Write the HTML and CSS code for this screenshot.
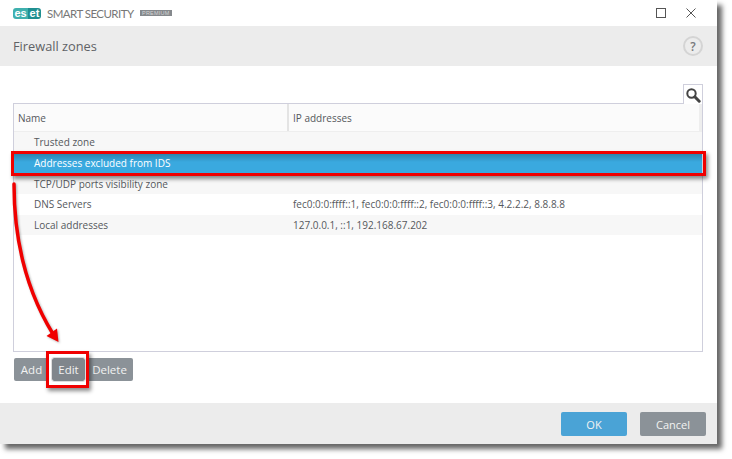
FILE: index.html
```html
<!DOCTYPE html>
<html lang="en">
<head>
<meta charset="utf-8">
<title>Firewall zones</title>
<link rel="stylesheet" href="styles.css">
</head>
<body>
<div class="window">
  <div class="titlebar">
    <div class="brand">
      <span class="logo"><span class="logo-es">es</span><span class="logo-et">et</span></span>
      <span class="product">SMART SECURITY</span>
      <span class="tier">PREMIUM</span>
    </div>
    <div class="controls">
      <svg width="14" height="14" viewBox="0 0 14 14"><rect x="2.5" y="2.5" width="9" height="9" fill="none" stroke="#555" stroke-width="1"/></svg>
      <svg width="14" height="14" viewBox="0 0 14 14"><path d="M2.5 2.5 L11.5 11.5 M11.5 2.5 L2.5 11.5" fill="none" stroke="#555" stroke-width="1"/></svg>
    </div>
  </div>
  <div class="header">
    <h1 class="heading">Firewall zones</h1>
    <span class="help">?</span>
  </div>
  <div class="content">
    <div class="search-row">
      <span class="search">
        <svg width="16" height="16" viewBox="0 0 16 16"><circle cx="6.5" cy="6.5" r="4.2" fill="none" stroke="#444" stroke-width="2"/><path d="M9.8 9.8 L14.2 14.2" stroke="#444" stroke-width="3" stroke-linecap="round"/></svg>
      </span>
    </div>
    <div class="table">
      <div class="thead">
        <div class="cell-name">Name</div>
        <div class="th-ip">IP addresses</div>
      </div>
      <div class="row"><div class="cell-name indent">Trusted zone</div><div class="cell-ip"></div></div>
      <div class="row selected"><div class="cell-name indent">Addresses excluded from IDS</div><div class="cell-ip"></div></div>
      <div class="row"><div class="cell-name indent">TCP/UDP ports visibility zone</div><div class="cell-ip"></div></div>
      <div class="row plain"><div class="cell-name indent">DNS Servers</div><div class="cell-ip">fec0:0:0:ffff::1, fec0:0:0:ffff::2, fec0:0:0:ffff::3, 4.2.2.2, 8.8.8.8</div></div>
      <div class="row"><div class="cell-name indent">Local addresses</div><div class="cell-ip">127.0.0.1, ::1, 192.168.67.202</div></div>
    </div>
    <div class="actions">
      <button class="btn btn-add">Add</button>
      <button class="btn btn-edit">Edit</button>
      <button class="btn btn-delete">Delete</button>
    </div>
  </div>
  <div class="footer">
    <button class="btn-main btn-ok">OK</button>
    <button class="btn-main btn-cancel">Cancel</button>
  </div>
</div>
<div class="mark mark-row"></div>
<div class="mark mark-edit"></div>
<svg class="arrow" width="732" height="459" viewBox="0 0 732 459">
  <path class="arrow-line" d="M14 184 C14 240 26 290 53 334"/>
  <path class="arrow-head" d="M58.5 342 L46.5 336 L57 328.5 Z"/>
</svg>
</body>
</html>
```
FILE: styles.css
```css
* { box-sizing: border-box; }
html, body { margin: 0; padding: 0; }
body { width: 732px; height: 459px; background: #fff; font-family: "Open Sans", "Noto Sans", sans-serif; font-size: 10px; color: #55585c; overflow: hidden; position: relative; }
.window { width: 717px; height: 444px; background: #fff; display: flex; flex-direction: column; box-shadow: 5px 5px 5px #666; }
.titlebar { height: 26px; display: flex; justify-content: space-between; align-items: center; padding: 0 19px 0 13px; flex: none; }
.brand { display: flex; align-items: center; gap: 6px; }
.logo { display: inline-flex; height: 11px; width: 28px; color: #fff; font-family: "Liberation Sans", sans-serif; font-weight: 700; font-size: 11px; line-height: 10px; }
.logo-es { width: 15px; height: 11px; text-align: center; background: #3fb0ae; border-radius: 3px 0 0 3px; }
.logo-et { width: 13px; height: 11px; text-align: center; background: #1f8f90; border-radius: 0 3px 3px 0; }
.product { font-family: "Lato", sans-serif; font-size: 11.5px; color: #777; letter-spacing: -0.55px; }
.tier { background: #85898d; color: #d5d5d5; font-family: "Liberation Sans", sans-serif; font-size: 5.5px; padding: 0 2.5px; line-height: 6px; letter-spacing: 0.2px; }
.controls { display: flex; gap: 16px; }
.header { height: 40px; background: #ececec; display: flex; justify-content: space-between; align-items: center; padding: 0 14px 0 13px; flex: none; }
.heading { margin: 0; font-size: 12.8px; font-weight: 400; color: #5f6266; }
.help { width: 20px; height: 20px; border: 2px solid #d4d4d4; border-radius: 50%; display: flex; align-items: center; justify-content: center; font-size: 12px; font-weight: 600; color: #77797c; }
.content { flex: 1; padding: 18px 14px 0 13px; display: flex; flex-direction: column; }
.search-row { display: flex; justify-content: flex-end; height: 19px; position: relative; z-index: 1; }
.search { width: 20px; height: 20px; border: 1px solid #cfcfdc; border-bottom: 0; background: #fff; display: flex; align-items: center; justify-content: center; }
.table { height: 249px; border: 1px solid #cfcfdc; display: flex; flex-direction: column; }
.thead { height: 28px; display: flex; align-items: center; background: #fbfbfb; border-bottom: 1px solid #eee; flex: none; border-right: 3px solid #eee; }
.cell-name { width: 273px; padding-left: 4px; flex: none; }
.cell-ip { padding-left: 6px; flex: 1; }
.th-ip { padding-left: 4px; flex: 1; border-left: 2px solid #e4e4e4; height: 100%; display: flex; align-items: center; }
.indent { padding-left: 20px; }
.row { height: 20.7px; display: flex; align-items: center; background: #f7f7f7; }
.row.plain { background: #fff; }
.row.selected { background: linear-gradient(#2a7fa9, #3aa9df 45%); color: #fff; }
.actions { display: flex; margin: 6px 0 0 1px; }
.btn { height: 23px; border: 0; background: #8b9298; color: #f2f2f2; font: inherit; font-size: 11.5px; padding: 0; border-radius: 2px; }
.btn-add { width: 35px; }
.btn-edit { width: 33px; margin: 0 1px 0 3px; background: #80868c; outline: 1px solid #ddd; }
.btn-delete { width: 47px; }
.footer { height: 41px; background: #ececec; display: flex; justify-content: flex-end; align-items: center; gap: 13px; padding: 1px 11px 0 0; flex: none; }
.btn-main { width: 66px; height: 24px; border: 0; border-radius: 2px; color: #f2f2f2; font: inherit; font-size: 11px; }
.btn-ok { background: #4aa3d6; }
.btn-cancel { background: #8b9298; }
.mark { position: absolute; border: 3px solid #f00000; }
.mark-row { left: 11px; top: 151px; width: 695px; height: 25px; box-shadow: 2px 3px 4px rgba(0,0,0,.45); }
.mark-edit { left: 46px; top: 351px; width: 43px; height: 37px; box-shadow: 2px 3px 4px rgba(0,0,0,.45); }
.arrow { position: absolute; left: 0; top: 0; pointer-events: none; filter: drop-shadow(1px 1px 1px rgba(0,0,0,.3)); }
.arrow-line { fill: none; stroke: #f00000; stroke-width: 3.5; stroke-linecap: round; }
.arrow-head { fill: #f00000; }
```
